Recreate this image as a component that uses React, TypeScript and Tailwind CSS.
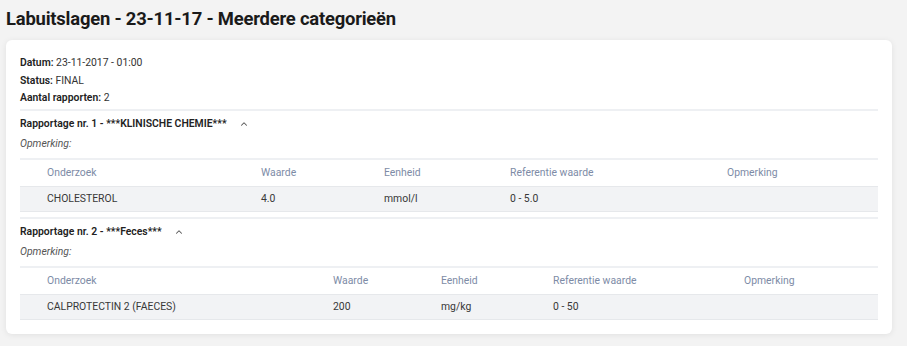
import { ChevronUp } from "lucide-react"

type Result = {
  test: string
  value: string
  unit: string
  reference: string
  note: string
}

type Report = {
  nr: number
  category: string
  cols: string
  rows: Result[]
}

const REPORTS: Report[] = [
  {
    nr: 1,
    category: "***KLINISCHE CHEMIE***",
    cols: "grid-cols-[214px_123px_126px_217px_1fr]",
    rows: [
      { test: "CHOLESTEROL", value: "4.0", unit: "mmol/l", reference: "0 - 5.0", note: "" },
    ],
  },
  {
    nr: 2,
    category: "***Feces***",
    cols: "grid-cols-[286px_108px_112px_191px_1fr]",
    rows: [
      { test: "CALPROTECTIN 2 (FAECES)", value: "200", unit: "mg/kg", reference: "0 - 50", note: "" },
    ],
  },
]

const HEADERS = ["Onderzoek", "Waarde", "Eenheid", "Referentie waarde", "Opmerking"]

function ReportSection({ report }: { report: Report }) {
  return (
    <section className="border-t-2 border-[#eef0f3]">
      <div className="flex h-[26px] items-center">
        <h3 className="text-[10.4px] font-semibold text-[#222]">
          Rapportage nr. {report.nr} - {report.category}
        </h3>
        <ChevronUp className="ml-[12px] size-[10px] text-[#555]" strokeWidth={2.5} />
      </div>
      <p className="pb-[7px] text-[10.4px] italic leading-[14px] text-[#555]">Opmerking:</p>
      <div className="border-t-2 border-[#eef0f3] text-[10.4px]">
        <div className={`grid ${report.cols} h-[26px] items-center text-[#7d8ba6]`}>
          {HEADERS.map((h) => (
            <div key={h} className="pl-[27px]">
              {h}
            </div>
          ))}
        </div>
        {report.rows.map((r) => (
          <div
            key={r.test}
            className={`grid ${report.cols} h-[26px] items-center border-y border-[#e6e8eb] bg-[#f2f3f5] text-[#383838]`}
          >
            <div className="pl-[27px]">{r.test}</div>
            <div className="pl-[27px]">{r.value}</div>
            <div className="pl-[27px]">{r.unit}</div>
            <div className="pl-[27px]">{r.reference}</div>
            <div className="pl-[27px]">{r.note}</div>
          </div>
        ))}
      </div>
    </section>
  )
}

export default function App() {
  return (
    <div className="h-[346px] w-[907px] bg-[#f3f3f3] pl-[6px] pr-[15px] font-['Roboto',sans-serif]">
      <h1 className="h-[40px] pt-[6px] text-[18.4px] font-bold leading-[26px] tracking-[-0.2px] text-[#1a1a1a]">
        Labuitslagen - 23-11-17 - Meerdere categorieën
      </h1>
      <div className="rounded-[6px] bg-white px-[14px] pb-[14px] pt-[14px] shadow-[0_1px_6px_rgba(0,0,0,0.08)]">
        <div className="flex flex-col pb-[2px] text-[10.4px] leading-[17.5px] text-[#333]">
          <p>
            <span className="font-semibold text-[#222]">Datum:</span> 23-11-2017 - 01:00
          </p>
          <p>
            <span className="font-semibold text-[#222]">Status:</span> FINAL
          </p>
          <p>
            <span className="font-semibold text-[#222]">Aantal rapporten:</span> 2
          </p>
        </div>
        <div className="flex flex-col gap-[5px]">
          {REPORTS.map((r) => (
            <ReportSection key={r.nr} report={r} />
          ))}
        </div>
      </div>
    </div>
  )
}
